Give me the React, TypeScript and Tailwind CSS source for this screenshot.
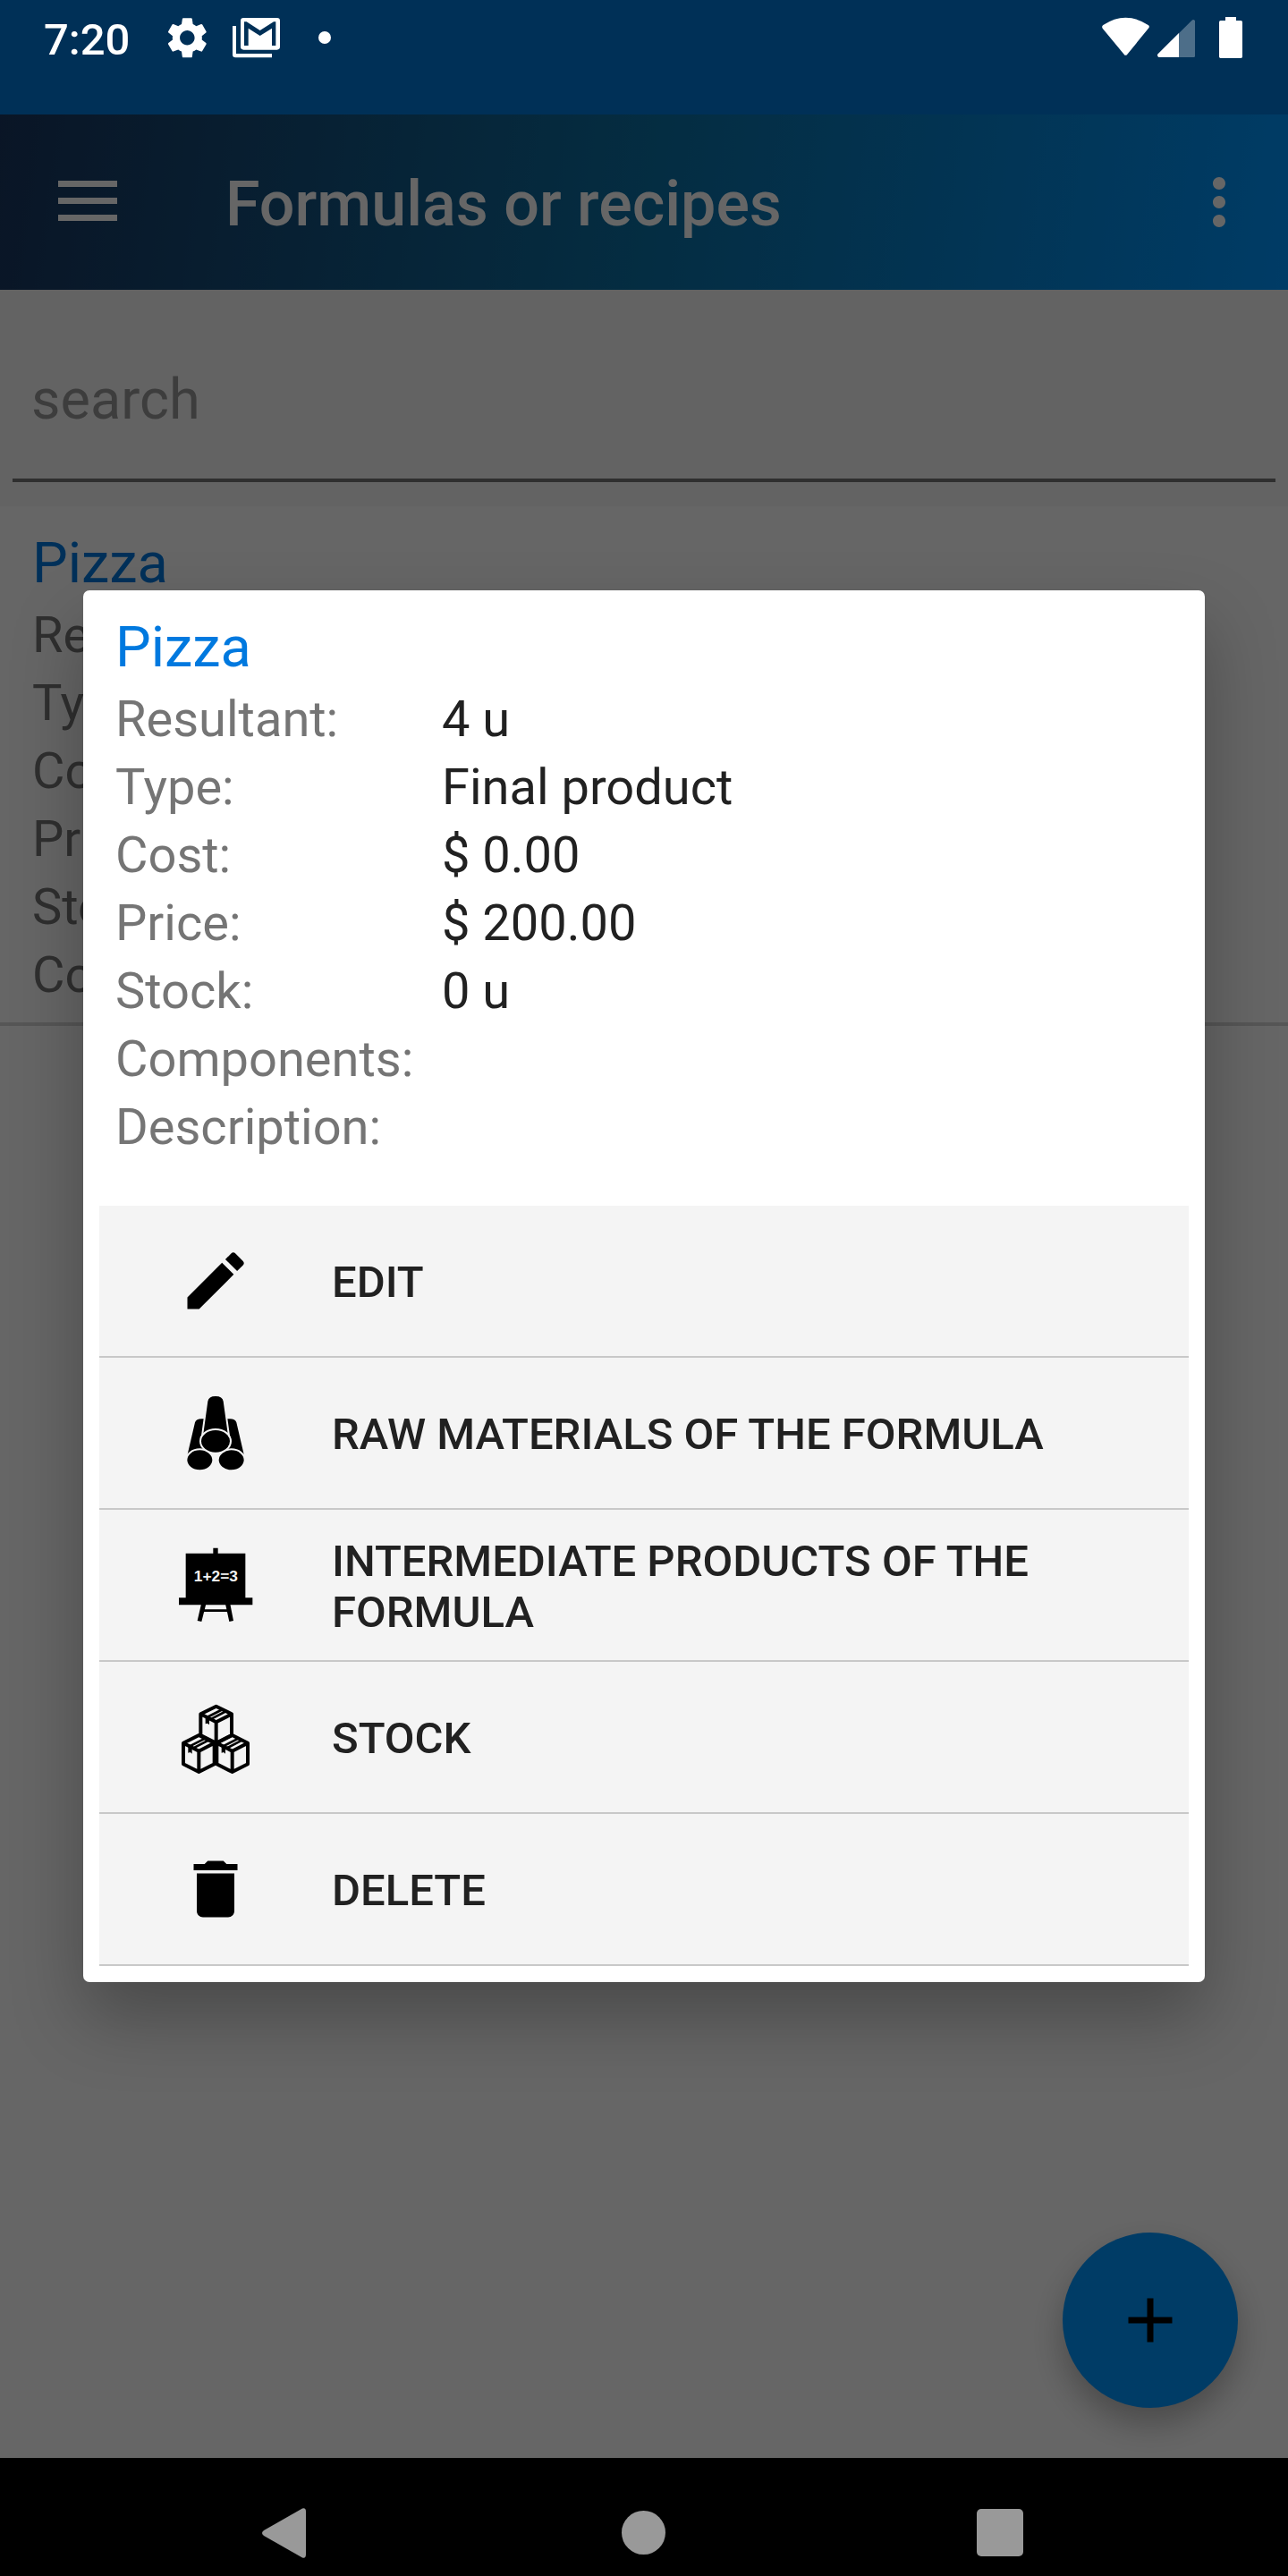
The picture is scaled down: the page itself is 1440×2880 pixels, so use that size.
import { useState } from 'react';
import type { ReactNode } from 'react';
import { MdAdd, MdDelete, MdEdit, MdMoreVert } from 'react-icons/md';

type Field = { label: string; value: string };

const FORMULA_NAME = 'Pizza';

const FIELDS: Field[] = [
  { label: 'Resultant:', value: '4 u' },
  { label: 'Type:', value: 'Final product' },
  { label: 'Cost:', value: '$ 0.00' },
  { label: 'Price:', value: '$ 200.00' },
  { label: 'Stock:', value: '0 u' },
  { label: 'Components:', value: '' },
  { label: 'Description:', value: '' },
];

function StatusBar() {
  return (
    <div className="flex justify-between bg-[#003057] pb-10 text-white">
      <div className="flex h-22 items-center gap-5 pl-[49px]">
        <span className="mr-[18px] text-[49px] leading-none font-medium">7:20</span>
        <svg viewBox="549 0 159 264" className="h-22 w-[53px]" fill="currentColor" aria-hidden="true">
          <path
            transform="translate(545.5 44.5) scale(6.875)"
            d="M19.14 12.94c.04-.3.06-.61.06-.94 0-.32-.02-.64-.07-.94l2.03-1.58c.18-.14.23-.41.12-.61l-1.92-3.32c-.12-.22-.37-.29-.59-.22l-2.39.96c-.5-.38-1.03-.7-1.62-.94l-.36-2.54c-.04-.24-.24-.41-.48-.41h-3.84c-.24 0-.43.17-.47.41l-.36 2.54c-.59.24-1.13.57-1.62.94l-2.39-.96c-.22-.08-.47 0-.59.22L2.74 8.87c-.12.21-.08.47.12.61l2.03 1.58c-.05.3-.09.63-.09.94s.02.64.07.94l-2.03 1.58c-.18.14-.23.41-.12.61l1.92 3.32c.12.22.37.29.59.22l2.39-.96c.5.38 1.03.7 1.62.94l.36 2.54c.05.24.24.41.48.41h3.84c.24 0 .44-.17.47-.41l.36-2.54c.59-.24 1.13-.56 1.62-.94l2.39.96c.22.08.47 0 .59-.22l1.92-3.32c.12-.22.07-.47-.12-.61l-2.01-1.58zM12 15.6c-1.98 0-3.6-1.62-3.6-3.6s1.62-3.6 3.6-3.6 3.6 1.62 3.6 3.6-1.62 3.6-3.6 3.6z"
          />
        </svg>
        <svg viewBox="768 0 180 264" className="h-22 w-15" fill="currentColor" aria-hidden="true">
          <path d="M780 87h12v93h120v13H790q-10 0-10-10z" />
          <path
            fillRule="evenodd"
            d="M817 60h112q10 0 10 10v87q0 10-10 10H817q-10 0-10-10V70q0-10 10-10zM819 153V73h8l45 29 46-29h7v80h-13V95l-40 25-39-25v58z"
          />
        </svg>
        <svg viewBox="1008 0 132 264" className="h-22 w-11" fill="currentColor" aria-hidden="true">
          <circle cx="1089" cy="126" r="21" />
        </svg>
      </div>
      <div className="flex h-22 items-center gap-1 pr-[50px]">
        <svg viewBox="270 0 171 264" className="h-22 w-[57px]" fill="currentColor" aria-hidden="true">
          <path d="M280 84Q355 34 431 84q6 4 2 10L361 182q-6 7-11 0L278 95q-4-6 2-11z" />
        </svg>
        <svg viewBox="453 0 141 264" className="h-22 w-[47px]" fill="currentColor" aria-hidden="true">
          <path opacity="0.3" d="M467 192q-8-4-3-11L577 69q6-6 11 1V188q0 4-4 4z" />
          <path d="M467 192q-8-4-3-11L534 111V192z" />
        </svg>
        <svg viewBox="606 0 144 264" className="h-22 w-12" fill="currentColor" aria-hidden="true">
          <rect x="690" y="57" width="36" height="16" />
          <rect x="669" y="69" width="78" height="126" rx="5" />
        </svg>
      </div>
    </div>
  );
}

function AppBar() {
  return (
    <header className="flex h-49 items-center bg-[linear-gradient(98deg,#19365f_0%,#0c70a4_50%,#0096ff_100%)] pr-[35px] text-white">
      <button type="button" aria-label="Open menu" className="flex h-49 w-49 items-center justify-center">
        <svg viewBox="0 0 66 48" className="h-12 w-[66px]" fill="currentColor" aria-hidden="true">
          <path d="M0 0h66v7H0zM0 19h66v7H0zM0 38h66v7H0z" />
        </svg>
      </button>
      <h1 className="flex-1 pt-1 pl-14 text-[70px] leading-none font-medium">Formulas or recipes</h1>
      <button type="button" aria-label="More options">
        <MdMoreVert className="h-21 w-21" />
      </button>
    </header>
  );
}

function SearchBox() {
  const [query, setQuery] = useState('');
  return (
    <div className="bg-[#f7f7f7] px-[14px] pt-[34px] pb-[27px]">
      <input
        type="text"
        aria-label="search"
        placeholder="search"
        value={query}
        onChange={e => setQuery(e.target.value)}
        className="block h-[181px] w-full border-b-4 border-[#757575] px-[21px] text-[63px] text-[#212121] outline-none placeholder:text-[#999999]"
      />
    </div>
  );
}

function FormulaSummary({ fields }: { fields: Field[] }) {
  return (
    <div className="px-9 pt-[22px]">
      <h2 className="text-[63px] leading-[84px] text-[#0079df]">{FORMULA_NAME}</h2>
      <dl className="text-[56px] leading-[76px]">
        {fields.map(f => (
          <div key={f.label} className="grid min-h-[76px] grid-cols-[365px_1fr]">
            <dt className="text-[#757575]">{f.label}</dt>
            <dd className="text-[#212121]">{f.value}</dd>
          </div>
        ))}
      </dl>
    </div>
  );
}

function LogsIcon() {
  return (
    <svg viewBox="87 120 252 252" className="h-21 w-21" aria-hidden="true">
      <path d="M119 318L144 211Q148 199 166 199H175V310H130z" />
      <path d="M308 318L283 211Q279 199 261 199H252V310H297z" />
      <g className="stroke-[#f4f4f4]" strokeWidth="6">
        <ellipse cx="160" cy="337" rx="45" ry="36" />
        <ellipse cx="266" cy="337" rx="45" ry="36" />
        <path d="M184 140Q187 120 213 120Q239 120 242 140L260 270H166z" />
        <ellipse cx="213" cy="274" rx="51" ry="40" />
      </g>
    </svg>
  );
}

function BoardIcon() {
  return (
    <svg viewBox="87 630 252 252" className="h-21 w-21" aria-hidden="true">
      <path d="M205 632h16v18h92v149h24v24H90v-24h23V650h92z" />
      <path d="M165 820h16l-15 59-14-3zM246 820h16l11 56-14 3zM172 838h84v8h-84z" />
      <text
        x="214"
        y="745"
        textAnchor="middle"
        className="fill-[#f4f4f4] font-['Liberation_Sans',sans-serif] text-[52px] font-bold"
      >
        1+2=3
      </text>
    </svg>
  );
}

function Carton({ x, y }: { x: number; y: number }) {
  return (
    <g transform={`translate(${x} ${y})`}>
      <path
        d="M0-53L52-27V44L0 70L-52 44V-27zM-52-27L0 0L52-27M0 0V70"
        fill="none"
        stroke="black"
        strokeWidth="12"
        strokeLinejoin="round"
      />
      <path d="M-31-16L22-43M-20-9L34-37" stroke="black" strokeWidth="8" />
      <path d="M-36-18L-23-12V9L-29 4L-36 6z" />
    </g>
  );
}

function CartonsIcon() {
  return (
    <svg viewBox="87 180 252 252" className="h-21 w-21" aria-hidden="true">
      <Carton x={215} y={256} />
      <Carton x={157} y={353} />
      <Carton x={269} y={353} />
    </svg>
  );
}

function ActionButton({ icon, children }: { icon: ReactNode; children: ReactNode }) {
  return (
    <button
      type="button"
      className="flex h-[170px] w-full items-center gap-22 border-b-2 border-[#c8c8c8] bg-[#f4f4f4] pr-16 pl-22 text-left text-[49px] leading-[57px] font-medium text-[#212121] uppercase"
    >
      <span className="shrink-0 text-black">{icon}</span>
      <span className="pt-[3px]">{children}</span>
    </button>
  );
}

function FormulaDialog() {
  return (
    <div
      role="dialog"
      aria-label={FORMULA_NAME}
      className="w-full rounded-[7px] bg-white pb-[18px] shadow-[0_40px_80px_rgba(0,0,0,0.28)]"
    >
      <FormulaSummary fields={FIELDS} />
      <div className="px-[18px] pt-[50px]">
        <ActionButton icon={<MdEdit className="h-21 w-21" />}>Edit</ActionButton>
        <ActionButton icon={<LogsIcon />}>Raw materials of the formula</ActionButton>
        <ActionButton icon={<BoardIcon />}>Intermediate products of the formula</ActionButton>
        <ActionButton icon={<CartonsIcon />}>Stock</ActionButton>
        <ActionButton icon={<MdDelete className="h-21 w-21" />}>Delete</ActionButton>
      </div>
    </div>
  );
}

function NavigationBar() {
  return (
    <nav className="grid h-33 grid-cols-3 items-start justify-items-center bg-black px-[120px] pt-14 text-[#999999]">
      <button type="button" aria-label="Back">
        <svg viewBox="0 0 56 56" className="h-14 w-14" fill="currentColor" aria-hidden="true">
          <path d="M3 25L46 .6Q50-.6 50 4V52Q50 56.6 46 55.4L3 31Q-1 28 3 25z" />
        </svg>
      </button>
      <button type="button" aria-label="Home">
        <svg viewBox="0 0 56 56" className="h-14 w-14" fill="currentColor" aria-hidden="true">
          <circle cx="27.5" cy="27.5" r="24.5" />
        </svg>
      </button>
      <button type="button" aria-label="Recent apps">
        <svg viewBox="0 0 56 56" className="h-14 w-14" fill="currentColor" aria-hidden="true">
          <rect x="0" y="1" width="52" height="53" rx="5" />
        </svg>
      </button>
    </nav>
  );
}

export default function App() {
  return (
    <div className="flex min-h-screen flex-col bg-white font-['Roboto',sans-serif]">
      <StatusBar />

      <div className="relative flex flex-1 flex-col">
        <AppBar />
        <main className="flex-1">
          <SearchBox />
          {/* The list rows leave the description out */}
          <div className="border-b-4 border-[#d6d6d6] pb-[15px]">
            <FormulaSummary fields={FIELDS.slice(0, 6)} />
          </div>
        </main>
        <button
          type="button"
          aria-label="Add formula"
          className="absolute right-14 bottom-14 flex h-49 w-49 items-center justify-center rounded-full bg-[#0096ff] text-black shadow-[0_18px_36px_rgba(0,0,0,0.28)]"
        >
          <MdAdd className="h-21 w-21" />
        </button>

        {/* Scrim with the open dialog */}
        <div className="absolute inset-0 flex items-center justify-center bg-black/60 px-[93px]">
          <FormulaDialog />
        </div>
      </div>

      <NavigationBar />
    </div>
  );
}
